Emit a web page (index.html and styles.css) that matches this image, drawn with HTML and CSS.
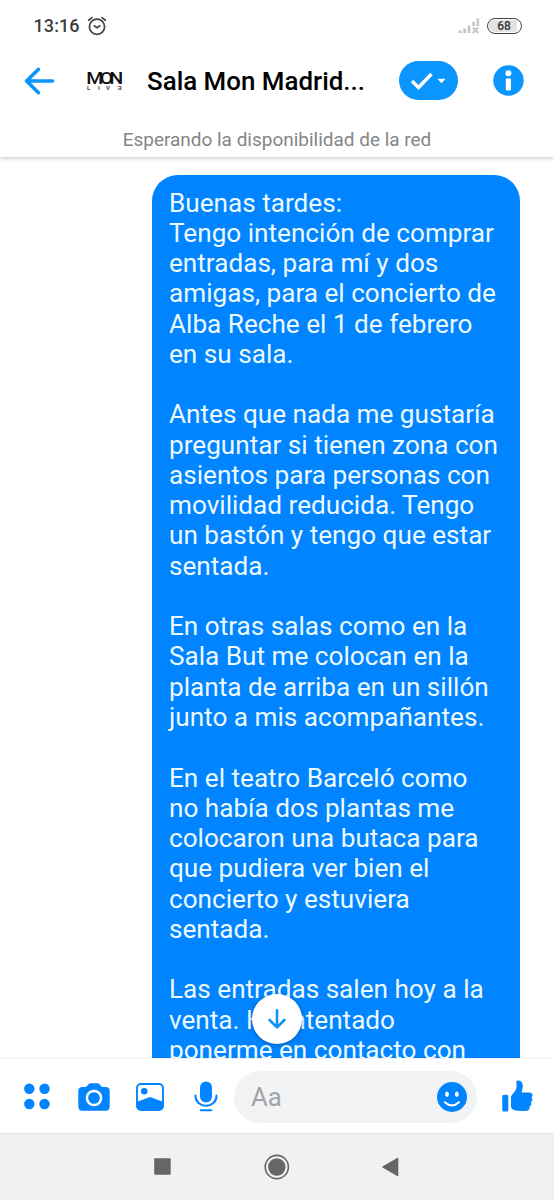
FILE: index.html
```html
<!DOCTYPE html>
<html lang="es">
<head>
<meta charset="utf-8">
<title>Sala Mon Madrid</title>
<link rel="stylesheet" href="styles.css">
</head>
<body>
<div class="screen">
  <div class="status">
    <span class="time">13:16</span>
    <svg class="alarm" width="20" height="20" viewBox="0 0 20 20" fill="none" stroke="#444" stroke-width="1.7" stroke-linecap="round"><circle cx="10" cy="10.8" r="7.6"/><path d="M1.6 4.2 5 1.6M18.4 4.2 15 1.6M7.3 9.8l2.700 2 2.900-2"/></svg>
    <svg class="signal" width="22" height="16" viewBox="0 0 22 16" fill="#c6c6c6"><path d="M.5 12.500h3.300V15H.5zM5.300 10.500h2.800V15H5.300zM9.600 7.500h2.800V15H9.600zM14.200 3.800H17V8h-2.800zM18.500.5h2.600V8h-2.600z"/><path d="m14.700 9.500 5.600 5.500m0-5.500L14.700 15" stroke="#c6c6c6" stroke-width="2"/></svg>
    <span class="battery">68</span>
  </div>
  <header class="header">
    <svg class="back" width="32" height="30" viewBox="0 0 32 30" fill="none" stroke="#0a95ff" stroke-width="3.6" stroke-linecap="round" stroke-linejoin="round"><path d="M29.500 15H3.500M15.500 3.300 3.500 15l12 11.700"/></svg>
    <svg class="logo" width="36" height="22" viewBox="0 0 36 22"><g class="logo-name"><text x="-.8" y="13.500" textLength="17" lengthAdjust="spacingAndGlyphs">M</text><text x="12.800" y="13.500" textLength="13.500" lengthAdjust="spacingAndGlyphs">O</text><text x="22.200" y="13.500" textLength="14" lengthAdjust="spacingAndGlyphs">N</text></g><g class="logo-sub"><text x="0" y="20.300">L</text><text x="11" y="20.300">I</text><text x="19" y="20.300">V</text><text x="30.500" y="20.300">Ǝ</text></g></svg>
    <h1 class="title">Sala Mon Madrid...</h1>
    <div class="pill"><svg width="59" height="39" viewBox="0 0 59 39"><path d="m13 20 6.500 6.500L32.500 13" fill="none" stroke="#fff" stroke-width="3.400"/><path d="M38.500 17.800h8l-4 4.400z" fill="#fff"/></svg></div>
    <svg class="info" width="31" height="31" viewBox="0 0 31 31"><circle cx="15.500" cy="15.500" r="15.200" fill="#0a95ff"/><circle cx="15.400" cy="8.200" r="3" fill="#fff"/><rect x="12.800" y="13.500" width="5.200" height="12" rx="1" fill="#fff"/></svg>
  </header>
  <div class="banner"><span class="banner-text">Esperando la disponibilidad de la red</span></div>
  <main class="chat">
    <div class="bubble">Buenas tardes:
Tengo intención de comprar
entradas, para mí y dos
amigas, para el concierto de
Alba Reche el 1 de febrero
en su sala.

Antes que nada me gustaría
preguntar si tienen zona con
asientos para personas con
movilidad reducida. Tengo
un bastón y tengo que estar
sentada.

En otras salas como en la
Sala But me colocan en la
planta de arriba en un sillón
junto a mis acompañantes.

En el teatro Barceló como
no había dos plantas me
colocaron una butaca para
que pudiera ver bien el
concierto y estuviera
sentada.

Las entradas salen hoy a la
venta. He intentado
ponerme en contacto con</div>
    <div class="jump"><svg width="20" height="22" viewBox="0 0 20 22" fill="none" stroke="#1094f4" stroke-width="2.600" stroke-linecap="round" stroke-linejoin="round"><path d="M10 2.200v17M2.600 12 10 19.400l7.400-7.400"/></svg></div>
  </main>
  <footer class="composer">
    <svg class="dots" width="27" height="27" viewBox="0 0 27 27"><circle cx="6.300" cy="5.800" r="5.200"/><circle cx="21.500" cy="5.800" r="5.200"/><circle cx="6.300" cy="21" r="5.200"/><circle cx="21.500" cy="21" r="5.200"/></svg>
    <svg class="camera" width="32" height="28" viewBox="0 0 32 28"><path d="M10.200 1.600Q11.200.2 13 .2h6q1.800 0 2.800 1.400l1.300 1.600q.7.800 1.900.8h2.500q4.200 0 4.200 4.200v15.300q0 4.200-4.200 4.200h-23Q.3 27.700.3 23.500V8.200Q.3 4 4.500 4H7q1.200 0 1.900-.8z"/><circle cx="16" cy="15" r="7.100" fill="none" stroke="#fff" stroke-width="2.500"/></svg>
    <svg class="photo" width="28" height="28" viewBox="0 0 28 28"><rect x="1" y="1" width="26" height="26" rx="4" fill="none" stroke="#0084ff" stroke-width="1.900"/><circle cx="8.200" cy="8.200" r="3.300"/><path d="M1 18.700 6 17l6.500-2.600q1.500-.6 3 0L22 17l5 1.700V23q0 4-4 4H5q-4 0-4-4z"/></svg>
    <svg class="mic" width="24" height="31" viewBox="0 0 24 31"><rect x="6" y=".5" width="12" height="21" rx="6"/><path d="M1.500 14.500v.8a10.500 9.500 0 0 0 21 0v-.8M6.800 29.300h10.400" fill="none" stroke="#0084ff" stroke-width="2.100" stroke-linecap="round"/></svg>
    <div class="field"><span class="hint">Aa</span>
      <svg width="30" height="30" viewBox="0 0 30 30"><circle cx="15" cy="15" r="15"/><ellipse cx="10" cy="12.200" rx="1.900" ry="2.700" fill="#fff"/><ellipse cx="19.800" cy="12.200" rx="1.900" ry="2.700" fill="#fff"/><path d="M7.800 20.200q7.100 6.300 14.200 0" fill="none" stroke="#fff" stroke-width="2" stroke-linecap="round"/></svg>
    </div>
    <svg class="thumb" width="31" height="32" viewBox="0 0 31 32"><rect x=".3" y="14.800" width="6" height="16.800" rx="1.600"/><path d="M9 17.500c0-1.200.5-2 1.300-3 2.800-3.200 4.300-5 4.300-8.400 0-2.700-.5-3.500-.2-4.500C14.700.6 15.600.2 17 .6c3 .8 4 3.300 3.700 6.400-.2 2.200-.8 3.600-1.100 5.500h7.700c3.200 0 4.300 3.300 2.200 4.900 1.500 1.600 1.200 3.700-.6 4.600 1 1.800.3 3.700-1.400 4.400.6 2.800-.8 4.600-4.200 4.600-5 0-9.200-.1-12.300-1.600Q9 28.600 9 26.800z"/></svg>
  </footer>
  <nav class="nav">
    <svg class="recents" width="17" height="17" viewBox="0 0 17 17"><rect x=".2" y=".2" width="16.500" height="16.500" rx="1"/></svg>
    <svg class="home" width="26" height="26" viewBox="0 0 26 26"><circle cx="12.800" cy="13" r="11.600" fill="none" stroke="#666" stroke-width="1.600"/><circle cx="12.800" cy="13" r="8.700"/></svg>
    <svg class="previous" width="17" height="20" viewBox="0 0 17 20"><path d="M15.200.9q1.100-.6 1.100.6v17q0 1.200-1.100.6L.8 10.700q-1.100-.7 0-1.400z"/></svg>
  </nav>
</div>
</body>
</html>
```
FILE: styles.css
```css
body {
  margin: 0;
  background: #fff;
  font-family: Roboto, "Liberation Sans", sans-serif;
}
.screen {
  width: 554px;
  height: 1200px;
  display: flex;
  flex-direction: column;
  overflow: hidden;
}
svg { display: block; flex: none; }
.status {
  height: 50px;
  flex: none;
  display: flex;
  align-items: center;
  padding: 1px 32.5px 0 33.5px;
  box-sizing: border-box;
}
.time {
  width: 46px;
  font-size: 18px;
  font-weight: 500;
  line-height: 22px;
  letter-spacing: 0.1px;
  color: #3c3c3c;
}
.alarm { margin-left: 7.5px; }
.signal { margin-left: auto; }
.battery {
  width: 35px;
  height: 16px;
  margin-left: 7px;
  box-sizing: border-box;
  border: 1.5px solid #444;
  border-radius: 8px;
  background: linear-gradient(90deg, #e2e2e2 0 88%, #fff 88%);
  box-shadow: inset 0 0 0 1px #fff;
  font-size: 12px;
  font-weight: 500;
  line-height: 14px;
  text-align: center;
  color: #333;
}
.header {
  height: 61px;
  flex: none;
  display: flex;
  align-items: center;
  padding-left: 23px;
  position: relative;
  z-index: 2;
  background: #fff;
}
.logo { margin-left: 32px; overflow: visible; }
.logo-name { font-size: 17px; font-weight: 500; fill: #111; }
.logo-sub { font-size: 6.2px; font-weight: 700; fill: #6b3a3d; }
.title {
  width: 222px;
  margin: 0 0 0 24px;
  font-size: 25.9px;
  font-weight: 500;
  line-height: 32px;
  white-space: nowrap;
  color: #000;
}
.pill {
  width: 59px;
  height: 39px;
  margin-left: 30px;
  border-radius: 20px;
  background: #0a95ff;
}
.info { margin-left: 35px; }
.banner {
  height: 46px;
  flex: none;
  display: flex;
  justify-content: center;
  align-items: center;
  padding-top: 10px;
  box-sizing: border-box;
  z-index: 1;
  background: #fff;
  box-shadow: 0 1px 4px rgba(0, 0, 0, 0.25);
  font-size: 18.98px;
  color: #858585;
}
.chat {
  height: 901px;
  flex: none;
  position: relative;
  display: flex;
  justify-content: flex-end;
  align-items: flex-start;
  overflow: hidden;
  padding: 18px 34px 0 0;
  box-sizing: border-box;
}
.bubble {
  width: 368px;
  height: 900px;
  box-sizing: border-box;
  padding: 12.5px 0 0 17px;
  border-radius: 26px 26px 0 0;
  background: #0084ff;
  color: #ecf9ff;
  font-size: 26.15px;
  line-height: 30.26px;
  white-space: pre;
}
.jump {
  position: absolute;
  left: 252px;
  top: 837px;
  width: 50px;
  height: 50px;
  display: flex;
  align-items: center;
  justify-content: center;
  border-radius: 50%;
  background: #fff;
  box-shadow: 0 1px 4px rgba(0, 0, 0, 0.3);
}
.composer {
  height: 75px;
  flex: none;
  display: flex;
  align-items: center;
  padding: 2px 0 0 23px;
  box-sizing: border-box;
  background: #fff;
  box-shadow: inset 0 1px #f0f0f0;
  fill: #0084ff;
}
.camera { margin-left: 27.5px; }
.photo { margin-left: 26.5px; }
.mic { margin-left: 30px; }
.field {
  width: 243px;
  height: 52px;
  margin-left: 16px;
  padding: 0 10px 0 17px;
  box-sizing: border-box;
  display: flex;
  align-items: center;
  justify-content: space-between;
  border-radius: 26px;
  background: #f1f3f5;
}
.hint { font-size: 25.8px; line-height: 30px; color: #a2a4a6; }
.thumb { margin-left: 25px; margin-top: -2px; }
.nav {
  height: 67px;
  flex: none;
  display: flex;
  align-items: center;
  padding-left: 153.500px;
  background: #f1f1f1;
  box-shadow: inset 0 1px #e2e2e2;
  fill: #666;
}
.home { margin-left: 93px; }
.previous { margin-left: 92px; }
```
